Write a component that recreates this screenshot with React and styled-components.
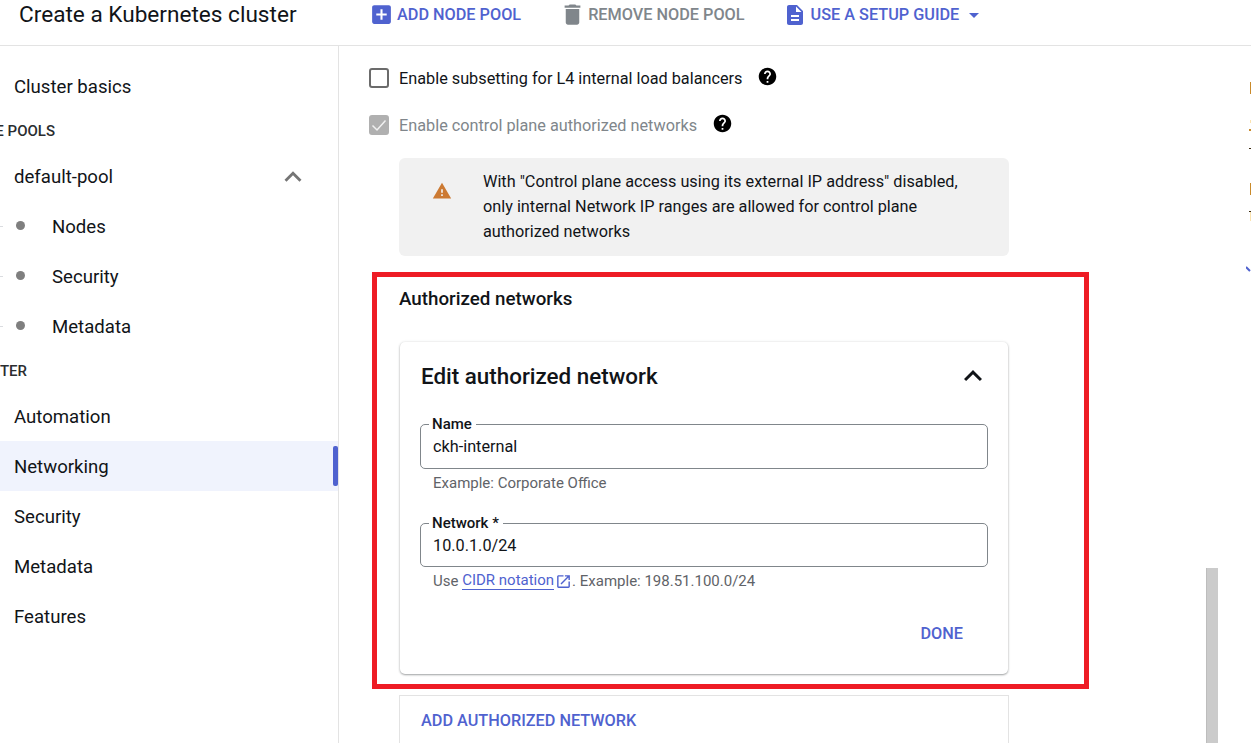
import React from "react";
import styled, { createGlobalStyle } from "styled-components";

const GlobalStyle = createGlobalStyle`
  html, body {
    margin: 0;
    padding: 0;
    background: #fff;
    overflow: hidden;
  }
  body {
    font-family: Roboto, "Liberation Sans", sans-serif;
    color: #111418;
  }
`;

const Page = styled.div`
  position: relative;
  width: 1251px;
  height: 743px;
  overflow: hidden;
  display: flex;
  flex-direction: column;
`;

const Header = styled.header`
  height: 44px;
  flex: none;
  display: flex;
  padding-bottom: 1px;
  border-bottom: 1px solid #e3e3e3;
`;

const Title = styled.h1`
  width: 350px;
  flex: none;
  margin: 0;
  padding-left: 19px;
  font-size: 22.6px;
  font-weight: 400;
  line-height: 29px;
  height: 29px;
`;

const Actions = styled.div`
  display: flex;
  align-items: flex-start;
  gap: 38px;
`;

const Action = styled.div`
  display: flex;
  align-items: center;
  gap: ${(p) => p.$gap}px;
  height: 29px;
  font-size: 16.25px;
  font-weight: 500;
  white-space: nowrap;
  color: ${(p) => (p.$muted ? "#80868b" : "#4f62cf")};
  svg {
    flex: none;
  }
`;

const Caret = styled.svg`
  margin-left: -1px;
`;

const Body = styled.div`
  flex: 1;
  display: flex;
  min-height: 0;
`;

const Sidebar = styled.nav`
  width: 338px;
  flex: none;
  padding-top: 15px;
  border-right: 1px solid #e3e3e3;
  box-sizing: content-box;
`;

const NavRow = styled.div`
  position: relative;
  box-sizing: border-box;
  height: 50px;
  display: flex;
  align-items: center;
  padding: 2px 0 0 ${(p) => (p.$sub ? 0 : 14)}px;
  font-size: 18.6px;
  background: ${(p) => (p.$active ? "#f0f3fd" : "transparent")};
`;

const SectionLabel = styled.div`
  height: 40px;
  width: ${(p) => p.$width}px;
  display: flex;
  align-items: center;
  justify-content: flex-end;
  overflow: hidden;
  white-space: nowrap;
  font-size: 15px;
  font-weight: 500;
  color: #2a2d30;
`;

const Tick = styled.span`
  width: 3px;
  height: 1px;
  margin-top: -2px;
  background: #dadce0;
  flex: none;
`;

const Bullet = styled.span`
  width: 9px;
  height: 9px;
  margin: -3px 27px 0 13px;
  border-radius: 50%;
  background: #7f7f7f;
  flex: none;
`;

const Chevron = styled.svg`
  margin-left: auto;
  margin-right: ${(p) => p.$right || 0}px;
  flex: none;
`;

const ActiveBar = styled.span`
  position: absolute;
  top: 5px;
  right: 0;
  width: 5px;
  height: 40px;
  border-radius: 2px;
  background: #4f62cf;
`;

const Main = styled.main`
  flex: 1;
  min-width: 0;
  padding: 22px 0 0 30px;
`;

const CheckRow = styled.div`
  display: flex;
  align-items: center;
  height: 20px;
  margin-bottom: ${(p) => p.$bottom}px;
  font-size: 16.25px;
  color: ${(p) => (p.$disabled ? "#80868b" : "inherit")};
`;

const Box = styled.span`
  width: 20px;
  height: 20px;
  box-sizing: border-box;
  margin-right: 10px;
  border-radius: 3px;
  border: 2px solid ${(p) => (p.$checked ? "#b0b0b0" : "#6b6b6b")};
  background: ${(p) => (p.$checked ? "#b0b0b0" : "#fff")};
  display: flex;
  align-items: center;
  justify-content: center;
  flex: none;
`;

const HelpIcon = styled.svg`
  margin-left: ${(p) => p.$left}px;
  margin-top: -3px;
  flex: none;
`;

const Section = styled.section`
  margin-left: 30px;
  width: 610px;
`;

const Alert = styled.div`
  box-sizing: border-box;
  height: 98px;
  display: flex;
  padding: 11px 30px 0 33px;
  background: #f1f1f1;
  border-radius: 6px;
  font-size: 16.25px;
  line-height: 25px;
  svg {
    flex: none;
    margin: 12px 31px 0 0;
  }
`;

const SectionTitle = styled.h2`
  margin: 32px 0 32px;
  height: 22px;
  font-size: 18.75px;
  line-height: 22px;
  font-weight: 500;
`;

const Card = styled.div`
  box-sizing: border-box;
  width: 608px;
  margin-left: 1px;
  height: 332px;
  padding: 0 20px;
  border-radius: 5px;
  background: #fff;
  box-shadow: 0 1px 2px rgba(60, 64, 67, 0.45), 0 0 3px rgba(60, 64, 67, 0.12);
`;

const CardHead = styled.div`
  height: 68px;
  display: flex;
  align-items: center;
  margin-bottom: 14px;
`;

const CardTitle = styled.h3`
  margin: 0 0 0 1px;
  font-size: 22.4px;
  font-weight: 500;
`;

const Field = styled.div`
  position: relative;
  box-sizing: border-box;
  width: 568px;
  height: ${(p) => p.$height}px;
  padding: 0 12px;
  display: flex;
  align-items: center;
  border: 1px solid #80868b;
  border-radius: 5px;
  font-size: 16.25px;
`;

const Legend = styled.label`
  position: absolute;
  top: -9px;
  left: 8px;
  padding: 0 4px 0 3px;
  background: #fff;
  font-size: 15px;
  line-height: 16px;
  font-weight: 500;
`;

const Hint = styled.div`
  height: 18px;
  margin: 5px 0 ${(p) => p.$bottom || 0}px 13px;
  display: flex;
  align-items: center;
  font-size: 15px;
  line-height: 18px;
  white-space: pre;
  color: #5f6368;
`;

const Link = styled.a`
  color: #4f62cf;
  border-bottom: 1px solid #4f62cf;
  line-height: 17px;
`;

const LinkIcon = styled.svg`
  margin: 0 0 0 1px;
  flex: none;
`;

const CardFooter = styled.div`
  display: flex;
  justify-content: flex-end;
  padding: 34px 5px 0 0;
`;

const DoneButton = styled.span`
  font-size: 16.25px;
  font-weight: 500;
  color: #4f62cf;
  margin-right: 20px;
`;

const AddButton = styled.span`
  font-size: 16.25px;
  font-weight: 500;
  color: #4f62cf;
`;

const AddRow = styled.div`
  box-sizing: border-box;
  width: 610px;
  margin-top: 21px;
  height: 60px;
  padding: 15px 21px 0;
  border: 1px solid #e3e3e3;
`;

const ScrollThumb = styled.div`
  position: absolute;
  left: 1206px;
  top: 568px;
  width: 12px;
  height: 175px;
  box-sizing: border-box;
  border-left: 1px solid #bdbdbd;
  background: #cbcbcb;
`;

const Annotation = styled.div`
  position: absolute;
  left: 372px;
  top: 272px;
  width: 717px;
  height: 417px;
  box-sizing: border-box;
  border: 5px solid #ee1c25;
  pointer-events: none;
`;

const EdgeMark = styled.span`
  position: absolute;
  right: 0;
  top: ${(p) => p.$top}px;
  width: ${(p) => p.$width}px;
  height: ${(p) => p.$height}px;
  background: ${(p) => p.$color};
`;

const EdgeChevron = styled.svg`
  position: absolute;
  right: 0;
  top: 265px;
`;

const Icon = ({ d, size = 24, color = "currentColor", ...rest }) => (
  <svg width={size} height={size} viewBox="0 0 24 24" fill={color} {...rest}>
    <path d={d} />
  </svg>
);

const paths = {
  add: "M19 3H5c-1.11 0-2 .9-2 2v14c0 1.1.89 2 2 2h14c1.1 0 2-.9 2-2V5c0-1.1-.9-2-2-2zm-2 10h-4v4h-2v-4H7v-2h4V7h2v4h4v2z",
  trash: "M6 19c0 1.1.9 2 2 2h8c1.1 0 2-.9 2-2V7H6v12zM19 4h-3.5l-1-1h-5l-1 1H5v2h14V4z",
  doc: "M14 2H6c-1.1 0-1.99.9-1.99 2L4 20c0 1.1.89 2 1.99 2H18c1.1 0 2-.9 2-2V8l-6-6zm2 16H8v-2h8v2zm0-4H8v-2h8v2zm-3-5V3.5L18.5 9H13z",
  help: "M12 2C6.48 2 2 6.48 2 12s4.48 10 10 10 10-4.48 10-10S17.52 2 12 2zm1 17h-2v-2h2v2zm2.07-7.75l-.9.92C13.45 12.9 13 13.5 13 15h-2v-.5c0-1.1.45-2.1 1.17-2.83l1.24-1.26c.37-.36.59-.86.59-1.41 0-1.1-.9-2-2-2s-2 .9-2 2H8c0-2.21 1.79-4 4-4s4 1.79 4 4c0 .88-.36 1.68-.93 2.25z",
  warning: "M1 21h22L12 2 1 21zm12-3h-2v-2h2v2zm0-4h-2v-4h2v4z",
  open: "M19 19H5V5h7V3H5c-1.11 0-2 .9-2 2v14c0 1.1.89 2 2 2h14c1.1 0 2-.9 2-2v-7h-2v7zM14 3v2h3.59l-9.83 9.83 1.41 1.41L19 6.41V10h2V3h-7z",
  less: "M12 8l-6 6 1.41 1.41L12 10.83l4.59 4.58L18 14z",
};

const poolItems = ["Nodes", "Security", "Metadata"];
const clusterItems = ["Automation", "Networking", "Security", "Metadata", "Features"];

// slivers of the next panel, cut off by the right edge of the shot
const edgeMarks = [
  { top: 82, width: 1, height: 12, color: "#c98a2b" },
  { top: 120, width: 1, height: 3, color: "#fbe3b0" },
  { top: 129, width: 2, height: 2, color: "#c98a2b" },
  { top: 148, width: 2, height: 1, color: "#3a2a10" },
  { top: 183, width: 1, height: 12, color: "#c98a2b" },
  { top: 211, width: 2, height: 1, color: "#3a2a10" },
  { top: 212, width: 1, height: 9, color: "#fbe3b0" },
];

export default function App() {
  return (
    <Page>
      <GlobalStyle />
      <Header>
        <Title>Create a Kubernetes cluster</Title>
        <Actions>
          <Action $gap={3}>
            <Icon d={paths.add} size={25} />
            ADD NODE POOL
          </Action>
          <Action $muted $gap={2}>
            <Icon d={paths.trash} size={27} />
            REMOVE NODE POOL
          </Action>
          <Action $gap={4}>
            <Icon d={paths.doc} />
            USE A SETUP GUIDE
            <Caret width="24" height="24" viewBox="0 0 24 24" fill="currentColor">
              <path d="M7 10l5 5 5-5z" />
            </Caret>
          </Action>
        </Actions>
      </Header>
      <Body>
        <Sidebar>
          <NavRow>Cluster basics</NavRow>
          <SectionLabel $width={55}>NODE POOLS</SectionLabel>
          <NavRow>
            default-pool
            <Chevron $right={28} width="34" height="34" viewBox="0 0 24 24" fill="#757575">
              <path d={paths.less} />
            </Chevron>
          </NavRow>
          {poolItems.map((item) => (
            <NavRow $sub key={item}>
              <Tick />
              <Bullet />
              {item}
            </NavRow>
          ))}
          <SectionLabel $width={27}>CLUSTER</SectionLabel>
          {clusterItems.map((item) => (
            <NavRow key={item} $active={item === "Networking"}>
              {item}
              {item === "Networking" && <ActiveBar />}
            </NavRow>
          ))}
        </Sidebar>
        <Main>
          <CheckRow $bottom={27}>
            <Box />
            Enable subsetting for L4 internal load balancers
            <HelpIcon $left={14} width="21" height="21" viewBox="0 0 24 24" fill="#000">
              <path d={paths.help} />
            </HelpIcon>
          </CheckRow>
          <CheckRow $disabled $bottom={23}>
            <Box $checked>
              <svg width="16" height="16" viewBox="0 0 16 16" fill="none">
                <path d="M1.5 8.5 L6 13 L14.5 3.5" stroke="#f1f1f1" strokeWidth="1.5" />
              </svg>
            </Box>
            Enable control plane authorized networks
            <HelpIcon $left={15} width="21" height="21" viewBox="0 0 24 24" fill="#000">
              <path d={paths.help} />
            </HelpIcon>
          </CheckRow>
          <Section>
            <Alert>
              <Icon d={paths.warning} size={20} color="#cc7a33" />
              <div>
                With "Control plane access using its external IP address" disabled,
                <br />
                only internal Network IP ranges are allowed for control plane
                <br />
                authorized networks
              </div>
            </Alert>
            <SectionTitle>Authorized networks</SectionTitle>
            <Card>
              <CardHead>
                <CardTitle>Edit authorized network</CardTitle>
                <Chevron $right={-3} width="36" height="36" viewBox="0 0 24 24" fill="#111418">
                  <path d={paths.less} />
                </Chevron>
              </CardHead>
              <Field $height={45}>
                <Legend>Name</Legend>
                ckh-internal
              </Field>
              <Hint $bottom={31}>Example: Corporate Office</Hint>
              <Field $height={44}>
                <Legend>Network *</Legend>
                10.0.1.0/24
              </Field>
              <Hint>
                Use <Link>CIDR notation</Link>
                <LinkIcon width="17" height="17" viewBox="0 0 24 24" fill="#4f62cf">
                  <path d={paths.open} />
                </LinkIcon>
                . Example: 198.51.100.0/24
              </Hint>
              <CardFooter>
                <DoneButton>DONE</DoneButton>
              </CardFooter>
            </Card>
            <AddRow>
              <AddButton>ADD AUTHORIZED NETWORK</AddButton>
            </AddRow>
          </Section>
        </Main>
      </Body>
      <ScrollThumb />
      {edgeMarks.map((mark) => (
        <EdgeMark
          key={mark.top}
          $top={mark.top}
          $width={mark.width}
          $height={mark.height}
          $color={mark.color}
        />
      ))}
      <EdgeChevron width="5" height="8" viewBox="0 0 5 8">
        <path d="M0 2 L4 6" stroke="#4f62cf" strokeWidth="2" fill="none" />
      </EdgeChevron>
      <Annotation />
    </Page>
  );
}
